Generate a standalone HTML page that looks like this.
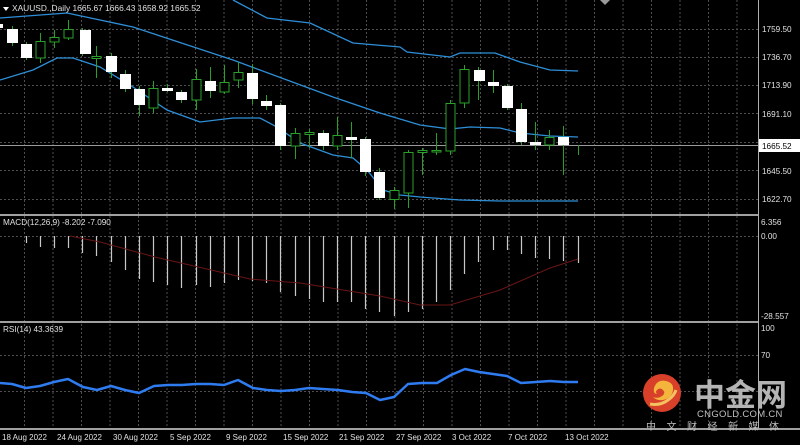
<!DOCTYPE html>
<html><head><meta charset="utf-8"><style>
html,body{margin:0;padding:0;background:#000;}
body{width:800px;height:445px;overflow:hidden;position:relative;font-family:"Liberation Sans","Noto Sans CJK SC",sans-serif;}
svg{position:absolute;left:0;top:0}
.t{font-family:"Liberation Sans",sans-serif;font-size:8.2px;fill:#e0e0e0}
</style></head><body>
<svg width="800" height="445" viewBox="0 0 800 445">
<rect width="800" height="445" fill="#000"/>
<g stroke="#4e4e4e" stroke-width="1" stroke-dasharray="2,2" fill="none">
<path d="M24.5 0V428M53 0V428M81.5 0V428M110 0V428M138.5 0V428M167 0V428M195.5 0V428M224 0V428M252.5 0V428M281 0V428M309.5 0V428M338 0V428M366.5 0V428M395 0V428M423.5 0V428M452 0V428M480.5 0V428M509 0V428M537.5 0V428M566 0V428M594.5 0V428M623 0V428M651.5 0V428M680 0V428M708.5 0V428M737 0V428"/>
<path d="M0 29.5H758M0 57.5H758M0 85.5H758M0 113.5H758M0 142.5H758M0 170.5H758M0 199.5H758"/>
<path d="M0 236.5H758M0 355.5H758M0 391.5H758"/>
</g>
<g stroke="#a0a0a0" stroke-width="2">
<path d="M0 215H758M0 322H758M0 429H800"/>
</g>
<path d="M758.5 0V429" stroke="#b0b0b0" stroke-width="1"/>
<path d="M0 145.5H758" stroke="#9a9a9a" stroke-width="1"/>
<g fill="none" stroke="#2e8fd8" stroke-width="1.3">
<polyline points="233,0 267,18 310,23 353,43 400,47 407,52 450,57 460,53 495,53 520,62 550,70 578,71"/>
<polyline points="0,18 67,13 133,27 233,60 333,97 380,113 420,125 450,129 470,127 500,128 520,133 550,136 578,137"/>
<polyline points="0,80 33,70 57,58 73,58 100,67 133,87 167,110 200,122 233,118 260,118 277,127 300,143 333,155 353,158 367,170 383,190 400,195 420,197 460,200 500,201 578,201"/>
</g>
<g stroke="#2aa02a" stroke-width="1">
<path d="M12.5 26V46M26.5 42V60M40.5 33V63M54.5 30V48M68.5 20V40M82.5 28V56M96.5 46V78M111.5 53V78M125.5 70V92M139.5 86V116M153.5 81V113M167.5 84V92M181.5 90V103M196.5 69V110M210.5 67V98M224.5 65V94M238.5 62V88M252.5 64V104M266.5 95V110M280.5 103V150M295.5 128V159M309.5 129V148M323.5 130V150M337.5 117V150M351.5 122V158M365.5 137V176M379.5 168V200M394.5 187V209M408.5 150V208M422.5 148V175M436.5 133V155M450.5 100V155M464.5 65V108M478.5 67V100M493.5 70V93M507.5 84V110M521.5 103V145M535.5 122V150M549.5 130V150M563.5 126V175M578.5 145V155"/>
</g>
<g fill="#000" stroke="#2aa02a" stroke-width="1">
<rect x="36" y="41.5" width="9" height="16.5"/>
<rect x="50" y="37.5" width="9" height="4.5"/>
<rect x="64" y="29.5" width="9" height="8.5"/>
<rect x="92" y="56.5" width="9" height="2"/>
<rect x="149" y="88.5" width="9" height="19.5"/>
<rect x="192" y="79.5" width="9" height="20.5"/>
<rect x="220" y="82.5" width="9" height="9.5"/>
<rect x="234" y="72.5" width="9" height="7.5"/>
<rect x="291" y="133.5" width="9" height="12.5"/>
<rect x="305" y="132.5" width="9" height="2"/>
<rect x="333" y="135.5" width="9" height="10.5"/>
<rect x="390" y="190.5" width="9" height="9"/>
<rect x="404" y="152.5" width="9" height="40.5"/>
<rect x="418" y="150.5" width="9" height="2"/>
<rect x="432" y="150.5" width="9" height="1.5"/>
<rect x="446" y="103.5" width="9" height="47.5"/>
<rect x="460" y="69.5" width="9" height="33.5"/>
<rect x="545" y="137.5" width="9" height="7.5"/>
</g>
<g fill="#fff">
<rect x="0" y="24" width="3" height="4"/>
<rect x="7" y="29" width="11" height="14"/>
<rect x="21" y="44" width="11" height="14"/>
<rect x="80" y="30" width="11" height="24"/>
<rect x="106" y="56" width="11" height="16"/>
<rect x="120" y="74" width="11" height="15"/>
<rect x="134" y="89" width="11" height="16"/>
<rect x="162" y="88" width="11" height="3"/>
<rect x="176" y="92" width="11" height="8"/>
<rect x="205" y="81" width="11" height="10"/>
<rect x="247" y="73" width="11" height="26"/>
<rect x="261" y="101" width="11" height="5"/>
<rect x="275" y="105" width="11" height="41"/>
<rect x="318" y="133" width="11" height="13"/>
<rect x="346" y="137" width="11" height="3"/>
<rect x="360" y="139" width="11" height="33"/>
<rect x="374" y="172" width="11" height="26"/>
<rect x="474" y="70" width="11" height="11"/>
<rect x="488" y="82" width="11" height="4"/>
<rect x="502" y="86" width="11" height="22"/>
<rect x="516" y="109" width="11" height="33"/>
<rect x="530" y="142" width="11" height="3"/>
<rect x="558" y="137" width="11" height="8"/>
</g>
<g stroke="#c8c8c8" stroke-width="1.2">
<path d="M26.5 236V243M40.5 236V247M54.5 236V248M68.5 236V248M82.5 236V253M96.5 236V256M111.5 236V262M125.5 236V270M139.5 236V279M153.5 236V282M167.5 236V285M181.5 236V288M196.5 236V285M210.5 236V287M224.5 236V283M238.5 236V280M252.5 236V281M266.5 236V283M280.5 236V292M295.5 236V296M309.5 236V299M323.5 236V302M337.5 236V302M351.5 236V302M365.5 236V309M379.5 236V312M394.5 236V316M408.5 236V312M422.5 236V309M436.5 236V302M450.5 236V290M464.5 236V274M478.5 236V262M493.5 236V250M507.5 236V250M521.5 236V254M535.5 236V258M549.5 236V259M563.5 236V261M578.5 236V263"/>
</g>
<polyline fill="none" stroke="#6a1515" stroke-width="1" points="70,236 100,242 155,257 250,279 300,283 380,296 420,305 450,305 500,290 550,268 578,259"/>
<polyline fill="none" stroke="#2f7cf0" stroke-width="2.5" stroke-linejoin="round" points="0,383 12,384 26,388 40,386 54,382 68,379 83,387 97,390 111,386 125,390 139,393 154,386 168,385 182,385 196,384 210,384 224,385 238,380 253,388 267,390 281,391 295,390 309,388 323,389 338,390 352,392 366,393 380,400 394,397 408,384 422,383 437,383 451,375 465,369 479,372 493,374 507,376 521,383 536,382 550,381 564,382 578,382"/>
<path d="M3 7 L9 7 L6 11Z" fill="#fff"/>
<text x="12" y="11" class="t" style="font-size:8.4px">XAUUSD.,Daily  1665.67 1666.43 1658.92 1665.52</text>
<path d="M600 0 L610 0 L605 5Z" fill="#9a9a9a"/>
<text x="3" y="225" class="t">MACD(12,26,9) -8.202 -7.090</text>
<text x="3" y="332" class="t">RSI(14) 43.3639</text>
<g class="t">
<text x="762" y="32">1759.50</text>
<text x="762" y="60">1736.70</text>
<text x="762" y="88">1713.90</text>
<text x="762" y="117">1691.10</text>
<text x="762" y="174">1645.50</text>
<text x="762" y="202">1622.70</text>
<text x="761" y="225">6.356</text>
<text x="761" y="239">0.00</text>
<text x="761" y="319">-28.557</text>
<text x="761" y="331">100</text>
<text x="761" y="358">70</text>
</g>
<rect x="759" y="139" width="41" height="13" fill="#fff"/>
<text x="762" y="149" class="t" style="fill:#000">1665.52</text>
<g class="t" style="font-size:8px">
<text x="2" y="440">18 Aug 2022</text>
<text x="57" y="440">24 Aug 2022</text>
<text x="113" y="440">30 Aug 2022</text>
<text x="170" y="440">5 Sep 2022</text>
<text x="226" y="440">9 Sep 2022</text>
<text x="283" y="440">15 Sep 2022</text>
<text x="339" y="440">21 Sep 2022</text>
<text x="396" y="440">27 Sep 2022</text>
<text x="452" y="440">3 Oct 2022</text>
<text x="508" y="440">7 Oct 2022</text>
<text x="565" y="440">13 Oct 2022</text>
</g>
<circle cx="662" cy="393" r="19" fill="#d8402a"/>
<path d="M654 388 q3 -9 12 -7 q8 2 7 9 q-1 8 -10 10 q-6 1 -10 -3 q5 2 9 -1 q4 -3 1 -6 q-3 -3 -6 0 q-2 2 0 4 q-4 0 -3 -6z" fill="#f4b53c"/>
<path d="M650 404 q10 2 18 -4 q6 -4 8 -10" fill="none" stroke="#f4c060" stroke-width="3"/>
<text x="694" y="406" style="font-family:'Noto Sans CJK SC',sans-serif;font-weight:bold;font-size:31px;fill:#b4b4b4">中金网</text>
<text x="697" y="417" style="font-family:'Liberation Sans',sans-serif;font-size:9.5px;fill:#c0c0c0;letter-spacing:0.3px">CNGOLD.COM.CN</text>
<text x="646" y="430" style="font-family:'Noto Sans CJK SC',sans-serif;font-size:10px;fill:#c0c0c0;letter-spacing:10.5px">中文财经新媒体</text>
</svg>
</body></html>
